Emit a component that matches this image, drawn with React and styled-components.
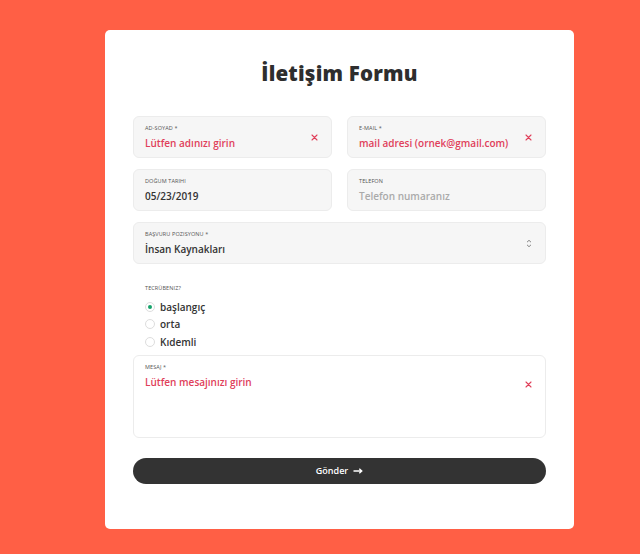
import React from 'react';
import styled, { createGlobalStyle } from 'styled-components';

const GlobalStyle = createGlobalStyle`
  html, body {
    margin: 0;
    padding: 0;
    background: #ff5f45;
    font-family: "Open Sans", "DejaVu Sans", sans-serif;
  }
`;

const CloseIcon = () => (
  <svg width="7" height="7" viewBox="0 0 7 7">
    <path d="M1 1 L6 6 M6 1 L1 6" stroke="#e0405a" strokeWidth="1.1" strokeLinecap="round" />
  </svg>
);

const SortIcon = () => (
  <svg width="6" height="9" viewBox="0 0 6 9">
    <path d="M1 3.2 L3 1.3 L5 3.2 M1 5.8 L3 7.7 L5 5.8" stroke="#777" strokeWidth="0.9" fill="none" />
  </svg>
);

const ArrowIcon = () => (
  <svg width="10" height="6" viewBox="0 0 10 6">
    <path d="M0.5 3 H8.5 M6.3 0.8 L8.8 3 L6.3 5.2" stroke="#fff" strokeWidth="1.3" fill="none" />
  </svg>
);

const App = () => {
  return (
    <>
      <GlobalStyle />
      <Page>
        <FormCard>
          <Title>İletişim Formu</Title>

          <Row>
            <Field>
              <FieldText>
                <Label>Ad-Soyad *</Label>
                <Value $error>Lütfen adınızı girin</Value>
              </FieldText>
              <CloseIcon />
            </Field>
            <Field>
              <FieldText>
                <Label>E-mail *</Label>
                <Value $error>mail adresi (ornek@gmail.com)</Value>
              </FieldText>
              <CloseIcon />
            </Field>
          </Row>

          <Row>
            <Field>
              <FieldText>
                <Label>Doğum Tarihi</Label>
                <Value>05/23/2019</Value>
              </FieldText>
            </Field>
            <Field>
              <FieldText>
                <Label>Telefon</Label>
                <Value $placeholder>Telefon numaranız</Value>
              </FieldText>
            </Field>
          </Row>

          <Field>
            <FieldText>
              <Label>Başvuru Pozisyonu *</Label>
              <Value>İnsan Kaynakları</Value>
            </FieldText>
            <SortIcon />
          </Field>

          <RadioGroup>
            <Label>Tecrübeniz?</Label>
            <RadioRow>
              <RadioDot $checked />
              <RadioText>başlangıç</RadioText>
            </RadioRow>
            <RadioRow>
              <RadioDot />
              <RadioText>orta</RadioText>
            </RadioRow>
            <RadioRow>
              <RadioDot />
              <RadioText>Kıdemli</RadioText>
            </RadioRow>
          </RadioGroup>

          <MessageBox>
            <FieldText>
              <Label>Mesaj *</Label>
              <Value $error>Lütfen mesajınızı girin</Value>
            </FieldText>
            <CloseIcon />
          </MessageBox>

          <SubmitButton>
            Gönder <ArrowIcon />
          </SubmitButton>
        </FormCard>
      </Page>
    </>
  );
};

const Page = styled.div`
  width: 640px;
  height: 554px;
  padding: 30px 0 0 105px;
  box-sizing: border-box;
`;

const FormCard = styled.div`
  width: 469px;
  height: 499px;
  box-sizing: border-box;
  background: #fff;
  border-radius: 5px;
  padding: 29px 28px 0;
  display: flex;
  flex-direction: column;
`;

const Title = styled.h1`
  margin: 0 0 29px;
  text-align: center;
  font-size: 20.5px;
  line-height: 28px;
  font-weight: 800;
  color: #2e2e2e;
  letter-spacing: 0.2px;
`;

const Row = styled.div`
  display: grid;
  grid-template-columns: 1fr 1fr;
  gap: 15px;
  margin-bottom: 11px;
`;

const Field = styled.div`
  height: 42px;
  box-sizing: border-box;
  background: #f6f6f6;
  border: 1px solid #ececec;
  border-radius: 6px;
  padding: 0 13px 0 11px;
  display: flex;
  align-items: center;
  justify-content: space-between;
`;

const FieldText = styled.div`
  display: flex;
  flex-direction: column;
  gap: 4px;
`;

const Label = styled.span`
  font-size: 5.5px;
  line-height: 7px;
  font-weight: 500;
  text-transform: uppercase;
  color: #555;
  letter-spacing: 0.1px;
`;

const Value = styled.span`
  font-size: 10px;
  line-height: 14px;
  font-weight: 600;
  color: ${(p) => (p.$error ? '#e0405a' : p.$placeholder ? '#aaa' : '#333')};
`;

const RadioGroup = styled.div`
  display: flex;
  flex-direction: column;
  padding: 21px 0 0 12px;
  margin-bottom: 4px;

  & > ${Label} {
    margin-bottom: 6px;
  }
`;

const RadioRow = styled.div`
  display: flex;
  align-items: center;
  gap: 5px;
  height: 17.5px;
`;

const RadioDot = styled.span`
  width: 10px;
  height: 10px;
  border-radius: 50%;
  border: 1px solid #ddd;
  background: #fff;
  box-sizing: border-box;
  position: relative;

  &::after {
    content: '';
    display: ${(p) => (p.$checked ? 'block' : 'none')};
    position: absolute;
    inset: 2px;
    border-radius: 50%;
    background: #17a36b;
  }
`;

const RadioText = styled.span`
  font-size: 10px;
  font-weight: 600;
  color: #333;
`;

const MessageBox = styled(Field)`
  height: 83px;
  background: #fff;
  align-items: flex-start;
  padding-top: 8px;

  & > svg {
    margin-top: 17px;
  }
`;

const SubmitButton = styled.button`
  margin-top: 20px;
  height: 26px;
  border: none;
  border-radius: 13px;
  background: #333;
  color: #fff;
  font-family: inherit;
  font-size: 9px;
  font-weight: 600;
  display: flex;
  align-items: center;
  justify-content: center;
  gap: 5px;
  cursor: pointer;
`;

export default App;
